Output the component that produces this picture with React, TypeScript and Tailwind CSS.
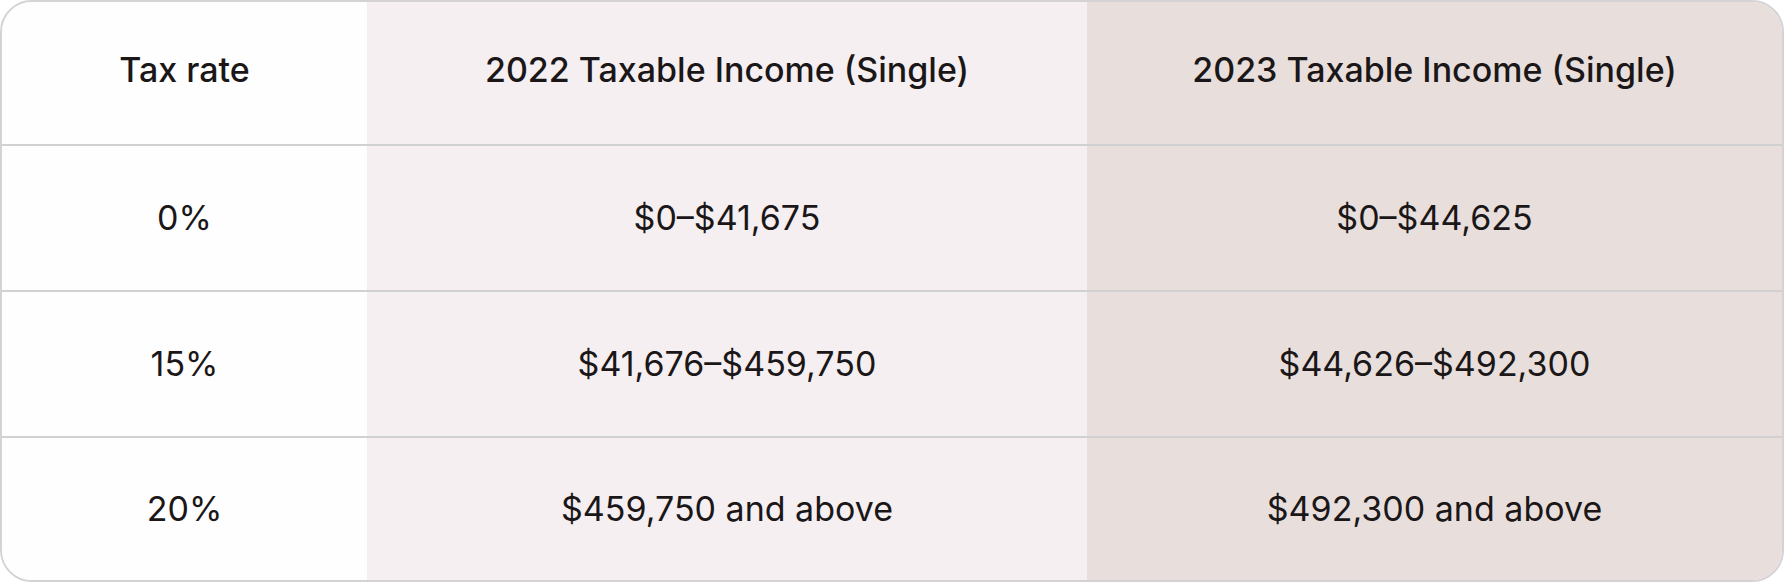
const rows = [
  { rate: '0%', y2022: '$0–$41,675', y2023: '$0–$44,625' },
  { rate: '15%', y2022: '$41,676–$459,750', y2023: '$44,626–$492,300' },
  { rate: '20%', y2022: '$459,750 and above', y2023: '$492,300 and above' },
];

export default function App() {
  return (
    <div className="w-[1784px] h-[582px] bg-white" style={{ fontFamily: 'Inter, "Liberation Sans", sans-serif' }}>
      <div className="h-full overflow-hidden rounded-[32px] border-2 border-[#d5d2d6] text-[#1b1718]">
        <div className="grid h-[144px] grid-cols-[365px_720px_1fr] border-b-2 border-black/[0.18] text-[34px] font-medium">
          <div className="flex items-center justify-center bg-[#fefefe] pb-[7px]">Tax rate</div>
          <div className="flex items-center justify-center bg-[#f5eff1] pb-[7px]">2022 Taxable Income (Single)</div>
          <div className="flex items-center justify-center bg-[#e8dfdc] pb-[7px]">2023 Taxable Income (Single)</div>
        </div>
        {rows.map((r, i) => (
          <div
            key={r.rate}
            className={
              i < rows.length - 1
                ? 'grid h-[146px] grid-cols-[365px_720px_1fr] border-b-2 border-black/[0.18] text-[34px]'
                : 'grid h-[142px] grid-cols-[365px_720px_1fr] text-[34px]'
            }
          >
            <div className="flex items-center justify-center bg-[#fefefe] pb-[2px]">{r.rate}</div>
            <div className="flex items-center justify-center bg-[#f5eff1] pb-[2px]">{r.y2022}</div>
            <div className="flex items-center justify-center bg-[#e8dfdc] pb-[2px]">{r.y2023}</div>
          </div>
        ))}
      </div>
    </div>
  );
}
